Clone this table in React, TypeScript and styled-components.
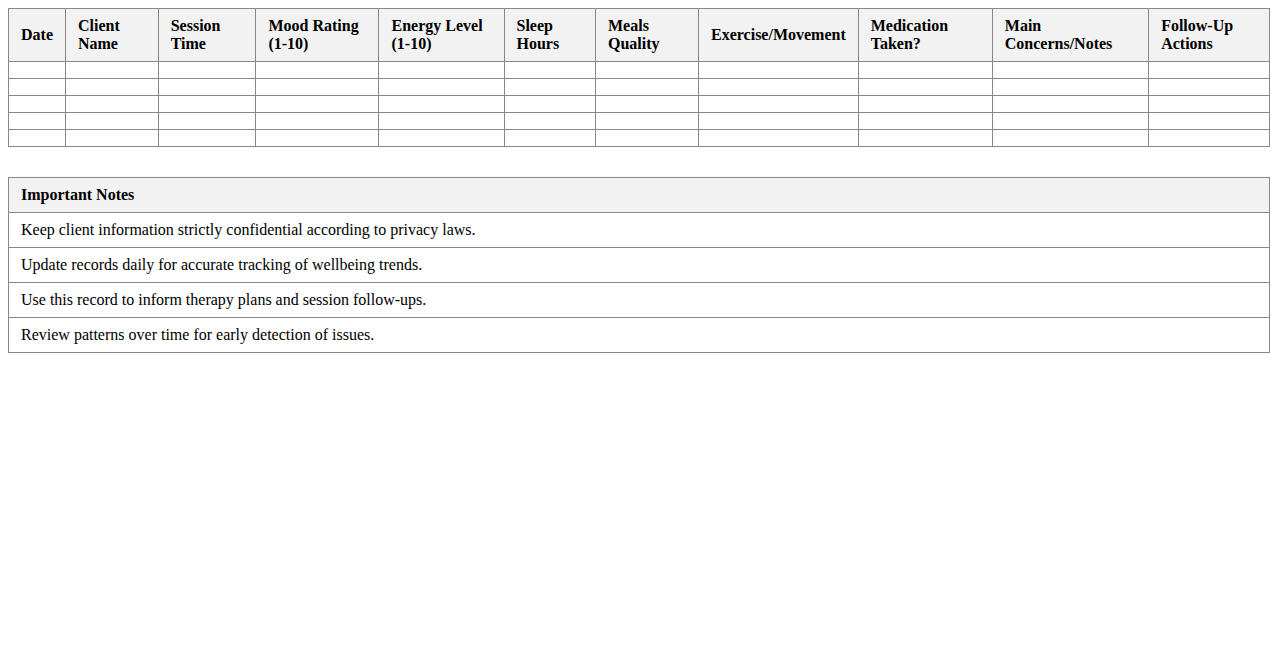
import React from "react";
import styled, { createGlobalStyle } from "styled-components";

const GlobalStyle = createGlobalStyle`
  body {
    margin: 8px;
    font-family: "Liberation Serif", "Times New Roman", serif;
    font-size: 16px;
    color: #000;
    background: #fff;
  }
`;

const Table = styled.table<{ $gap?: boolean }>`
  width: 100%;
  border-collapse: collapse;
  margin-top: ${(p) => (p.$gap ? "30px" : "0")};
`;

const HeadCell = styled.th`
  border: 1px solid #888;
  background: #f2f2f2;
  padding: 8px 12px;
  text-align: left;
  font-weight: bold;
`;

const Cell = styled.td`
  border: 1px solid #888;
  padding: 8px 12px;
  text-align: left;
`;

const headers = [
  "Date",
  "Client Name",
  "Session Time",
  "Mood Rating (1-10)",
  "Energy Level (1-10)",
  "Sleep Hours",
  "Meals Quality",
  "Exercise/Movement",
  "Medication Taken?",
  "Main Concerns/Notes",
  "Follow-Up Actions",
];

const notes = [
  "Keep client information strictly confidential according to privacy laws.",
  "Update records daily for accurate tracking of wellbeing trends.",
  "Use this record to inform therapy plans and session follow-ups.",
  "Review patterns over time for early detection of issues.",
];

export default function App() {
  return (
    <>
      <GlobalStyle />
      <Table>
        <thead>
          <tr>
            {headers.map((h) => (
              <HeadCell key={h}>{h}</HeadCell>
            ))}
          </tr>
        </thead>
        <tbody>
          {[0, 1, 2, 3, 4].map((r) => (
            <tr key={r}>
              {headers.map((h) => (
                <Cell key={h} />
              ))}
            </tr>
          ))}
        </tbody>
      </Table>
      <Table $gap>
        <thead>
          <tr>
            <HeadCell>Important Notes</HeadCell>
          </tr>
        </thead>
        <tbody>
          {notes.map((n) => (
            <tr key={n}>
              <Cell>{n}</Cell>
            </tr>
          ))}
        </tbody>
      </Table>
    </>
  );
}
